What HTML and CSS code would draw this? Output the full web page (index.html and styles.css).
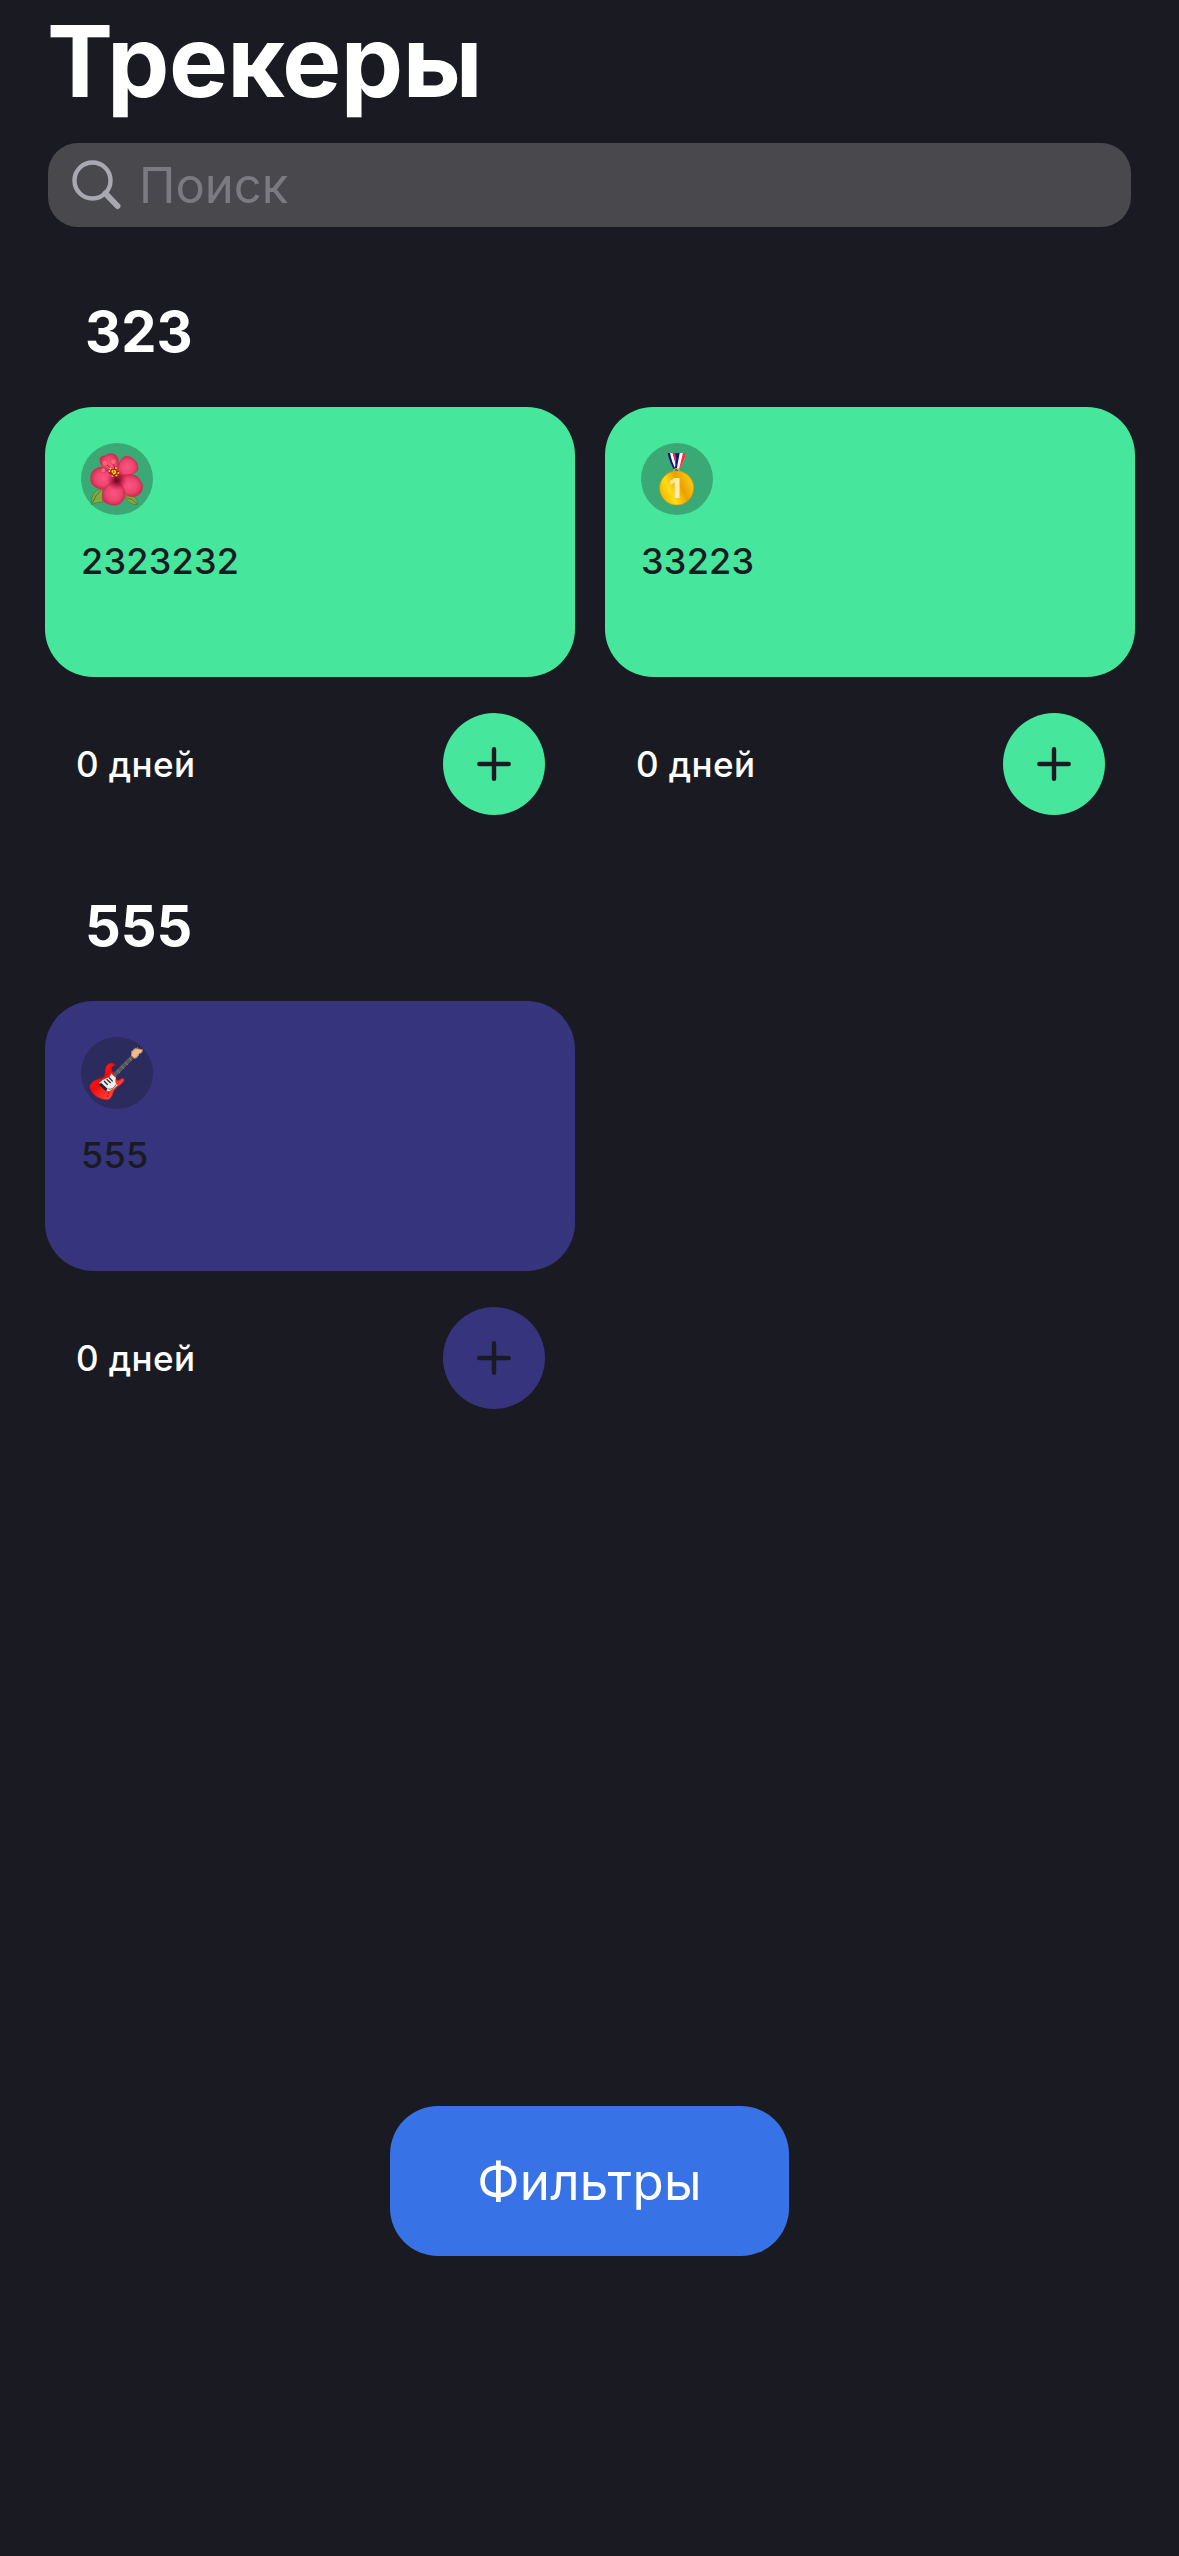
FILE: index.html
```html
<!DOCTYPE html>
<html lang="ru">
<head>
<meta charset="utf-8">
<title>Трекеры</title>
<link rel="stylesheet" href="styles.css">
</head>
<body>
<main class="screen">
  <h1 class="title"><span>Трекеры</span></h1>
  <div class="search">
    <svg class="search-icon" viewBox="0 0 52 52"><circle cx="21.500" cy="21.500" r="18"/><path d="M34.500 34.500 L46.500 47" class="handle"/></svg>
    <span class="placeholder">Поиск</span>
  </div>

  <section class="group">
    <h2 class="group-title"><span>323</span></h2>
    <div class="grid">
      <article class="tracker green">
        <div class="card">
          <div class="emoji">
            <svg viewBox="0 0 216 216">
              <defs>
                <radialGradient id="petal"><stop offset="0" stop-color="#fb5581"/><stop offset=".65" stop-color="#ee4470"/><stop offset="1" stop-color="#d22d50"/></radialGradient>
                <radialGradient id="core"><stop offset="0" stop-color="#6d001c"/><stop offset="1" stop-color="#a90f37" stop-opacity="0"/></radialGradient>
              </defs>
              <path d="M31 184 Q31 138 64 138 L66 177 Q48 177 31 184Z" fill="#82a944" stroke="#4c792e" stroke-width="2"/>
              <path d="M130 160 Q169 151 171 185 Q143 186 130 160Z" fill="#82a944" stroke="#4c792e" stroke-width="2"/>
              <path d="M34 180 Q43 156 60 142 M137 164 Q157 168 168 182" fill="none" stroke="#4c792e" stroke-width="3"/>
              <g fill="url(#petal)" stroke="#c9254b" stroke-width="1.500">
                <path d="M105 100 C87 92 53 72 57 48 C60 37 70 40 77 36 C85 29 106 31 109 43 C119 57 108 83 105 100Z"/>
                <path d="M107 99 C110 67 119 43 134 40 C144 38 151 43 156 48 C167 54 171 64 170 72 C179 90 140 98 107 106Z"/>
                <path d="M107 102 C91 72 54 67 44 78 C30 83 26 106 31 119 C38 135 67 145 85 134 C101 128 105 115 107 102Z"/>
                <path d="M107 105 C140 88 169 93 177 112 C190 126 185 149 172 156 C158 166 135 161 128 143 C118 130 112 117 107 105Z"/>
                <path d="M106 115 C78 121 64 139 64 158 C61 171 72 181 84 183 C97 190 117 187 123 175 C136 164 134 146 127 134 C122 122 113 118 106 115Z"/>
              </g>
              <circle cx="107" cy="112" r="30" fill="url(#core)"/>
              <path d="M103 86 L73 62 M105 84 L95 58 M101 86 L68 82" stroke="#bd183f" stroke-width="3" fill="none"/>
              <g fill="#ff6975" stroke="#c3203c"><circle cx="72" cy="60" r="8"/><circle cx="97" cy="56" r="8"/><circle cx="67" cy="82" r="7"/></g>
              <path d="M87 78 L109 103 M105 73 L95 98 M83 88 L114 88" fill="none" stroke="#8e1726" stroke-width="8"/>
              <path d="M87 75 L110 102 M106 73 L94 101 M83 84 L114 90" fill="none" stroke="#ffd51c" stroke-width="6" stroke-dasharray="5 4"/>
            </svg>
          </div>
          <p class="name">2323232</p>
        </div>
        <div class="footer"><span class="days">0 дней</span><button class="plus" aria-label="Добавить"><svg viewBox="0 0 34 34"><path d="M17 2.300V31.700M2.300 17H31.700"/></svg></button></div>
      </article>
      <article class="tracker green">
        <div class="card">
          <div class="emoji">
            <svg viewBox="0 0 216 216">
              <defs><linearGradient id="gold" x1="0" y1=".7" x2="1" y2=".2"><stop offset="0" stop-color="#f2b600"/><stop offset=".3" stop-color="#ffdc16"/><stop offset=".6" stop-color="#eba000"/><stop offset="1" stop-color="#ffd21b"/></linearGradient>
              <linearGradient id="one" x1="0" x2="1"><stop offset="0" stop-color="#ffe379"/><stop offset="1" stop-color="#fff4bd"/></linearGradient></defs>
              <path d="M80 30H107L116 78L101 83Q86 60 80 30Z" fill="#10127c"/>
              <path d="M87 30H95L109 78L104 79Q93 59 87 30Z" fill="#fff"/>
              <path d="M95 30H103L110 69L107 74Z" fill="#ef2941"/>
              <path d="M108 30H135Q130 60 112 83L101 81Z" fill="#17157e"/>
              <path d="M116 30H135Q130 60 112 82L107 79Z" fill="#fff"/>
              <path d="M126 30H135Q131 55 114 79Z" fill="#ff2b35"/>
              <circle cx="107" cy="85" r="8" fill="none" stroke="#cca963" stroke-width="4"/>
              <circle cx="107" cy="135" r="51" fill="url(#gold)" stroke="#d89c00" stroke-width="2"/>
              <text x="102" y="165" class="medal-number" fill="url(#one)">1</text>
            </svg>
          </div>
          <p class="name">33223</p>
        </div>
        <div class="footer"><span class="days">0 дней</span><button class="plus" aria-label="Добавить"><svg viewBox="0 0 34 34"><path d="M17 2.300V31.700M2.300 17H31.700"/></svg></button></div>
      </article>
    </div>
  </section>

  <section class="group">
    <h2 class="group-title"><span>555</span></h2>
    <div class="grid">
      <article class="tracker indigo">
        <div class="card">
          <div class="emoji">
            <svg viewBox="0 0 216 216">
              <defs><linearGradient id="body" x1="0" y1="0" x2="1" y2="1"><stop offset="0" stop-color="#ff4740"/><stop offset=".4" stop-color="#f6080c"/><stop offset=".8" stop-color="#ff4a40"/><stop offset="1" stop-color="#bc0b12"/></linearGradient></defs>
              <path d="M102 86 C98 75 80 76 75 91 C70 108 78 119 61 124 C41 129 24 139 27 153 C33 172 54 189 81 188 C96 183 93 165 104 155 C111 146 126 142 129 130 C130 119 122 124 115 129 C105 132 103 125 106 117 L94 104 C88 94 92 86 102 86Z" fill="url(#body)" stroke="#bf1721" stroke-width="2"/>
              <path d="M90 109 L105 122 C100 133 105 141 110 145 Q95 158 84 163 Q57 153 55 137 Q63 129 75 124 Q89 122 90 109Z" fill="#eeeef0"/>
              <path d="M94 112 L158 48 L166 56 L103 121Z" fill="#59595b"/>
              <path d="M108 99 L117 108 M120 87 L129 96 M132 75 L141 84 M144 63 L153 72" stroke="#919191" stroke-width="2"/>
              <path d="M151 56 Q148 43 163 34 Q173 36 185 38 Q184 49 174 50 Q170 64 160 64Z" fill="#f2bd86" stroke="#bb7650" stroke-width="2"/>
              <path d="M151 45 L170 32 M166 61 L174 52" stroke="#9aa0b4" stroke-width="4" stroke-dasharray="4 3"/>
              <path d="M69 132 L80 143 M77 127 L89 138 M84 121 L95 133" stroke="#292b30" stroke-width="4"/>
              <path d="M53 143 L60 137 L80 155 L74 162Z" fill="#262528"/>
              <path d="M82 156 Q95 160 106 142" fill="none" stroke="#68686d" stroke-width="3"/>
              <circle cx="82" cy="169" r="3" fill="#aa2426"/><circle cx="80" cy="178" r="3" fill="#aa2426"/>
            </svg>
          </div>
          <p class="name">555</p>
        </div>
        <div class="footer"><span class="days">0 дней</span><button class="plus" aria-label="Добавить"><svg viewBox="0 0 34 34"><path d="M17 2.300V31.700M2.300 17H31.700"/></svg></button></div>
      </article>
    </div>
  </section>

  <button class="filters">Фильтры</button>
</main>
</body>
</html>
```
FILE: styles.css
```css
* { box-sizing: border-box; }
html, body { margin: 0; background: #1a1b22; }
body, button { font-family: Inter, "Liberation Sans", sans-serif; }
h1, h2, p { margin: 0; }
button { border: 0; padding: 0; }
svg { display: block; }

.screen {
  width: 1179px;
  height: 2556px;
  display: flex;
  flex-direction: column;
  padding-bottom: 300px;
  background: #1a1b22;
  color: #fff;
  overflow: hidden;
}
.title {
  height: 143px;
  padding: 1px 0 0 47px;
  font-size: 99px;
  line-height: 120px;
  font-weight: 700;
  letter-spacing: -0.5px;
}
.search {
  height: 84px;
  margin: 0 48px;
  padding-left: 23px;
  display: flex;
  align-items: center;
  border-radius: 30px;
  background: #49484d;
}
.search-icon { width: 52px; height: 52px; fill: none; stroke: #a8a8b1; stroke-width: 4.4px; }
.handle { stroke-width: 6px; stroke-linecap: round; }
.placeholder { margin-left: 16px; padding-top: 2px; font-size: 49px; line-height: 60px; color: #7b7a80; }

.group-title {
  height: 180px;
  padding: 71px 0 0 85px;
  font-size: 56px;
  line-height: 68px;
  font-weight: 700;
}
.group + .group .group-title { height: 186px; padding-top: 77px; }
.grid {
  display: grid;
  grid-template-columns: 530px 530px;
  gap: 30px;
  padding-left: 45px;
}
.green { --tint: #46e69d; --badge: #3aa976; }
.indigo { --tint: #35347c; --badge: #2b2b5d; }
.card {
  height: 270px;
  padding: 36px;
  border-radius: 48px;
  background: var(--tint);
}
.emoji { width: 72px; height: 72px; border-radius: 50%; background: var(--badge); }
.medal-number { font: 800 82px Inter, sans-serif; text-anchor: middle; }
.name {
  margin-top: 24px;
  font-size: 36px;
  line-height: 44px;
  font-weight: 500;
  letter-spacing: 0.25px;
  color: #1a1b22;
}
.footer {
  height: 138px;
  padding: 36px 30px 0 31px;
  display: flex;
  justify-content: space-between;
}
.days { font-size: 35px; line-height: 102px; font-weight: 500; letter-spacing: 0.4px; }
.plus {
  width: 102px;
  height: 102px;
  display: grid;
  place-items: center;
  border-radius: 50%;
  background: var(--tint);
}
.plus svg { width: 34px; height: 34px; fill: none; stroke: #1a1b22; stroke-width: 4.4px; stroke-linecap: round; }
.filters {
  width: 399px;
  height: 150px;
  margin: auto auto 0 390px;
  padding-top: 1px;
  border-radius: 48px;
  background: #3772e7;
  color: #fff;
  font-size: 51px;
  line-height: 62px;
  letter-spacing: 0.3px;
}
```
